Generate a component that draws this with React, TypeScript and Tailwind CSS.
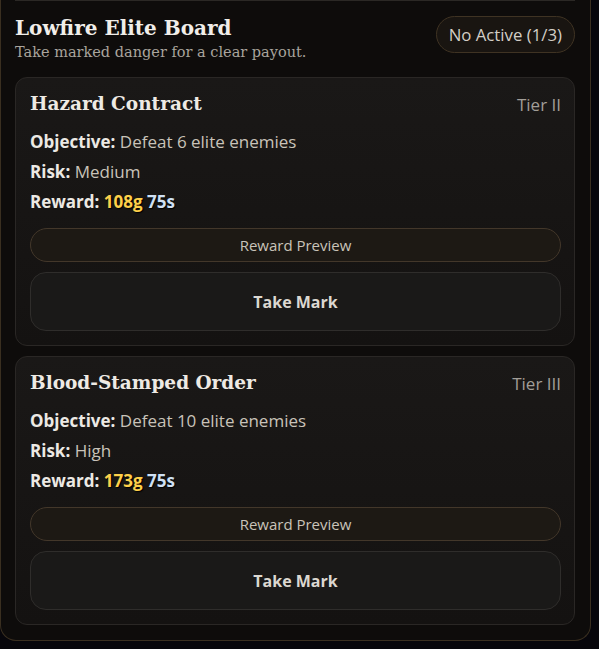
import React from "react";

const serif = { fontFamily: '"DejaVu Serif", Georgia, serif' };

function Contract({ title, tier, count, risk, gold }: { title: string; tier: string; count: number; risk: string; gold: string }) {
  return (
    <div className="rounded-xl border border-[#2a2725] bg-gradient-to-b from-[#1a1817] to-[#141211] pl-[14px] pr-[13px] pt-[13px] pb-[14px]">
      <div className="flex items-start justify-between">
        <h3 className="text-[18.5px] font-bold leading-[26px] text-[#eeeae4]" style={serif}>{title}</h3>
        <span className="mt-[1px] text-[17px] leading-[26px] text-[#a29e98]">{tier}</span>
      </div>
      <div className="mt-[12px] flex flex-col gap-[6px] text-[17px] leading-[24px]">
        <div className="text-[#c9c3b9]"><span className="font-bold text-[#ece9e4]">Objective:</span> Defeat {count} elite enemies</div>
        <div className="text-[#c9c3b9]"><span className="font-bold text-[#ece9e4]">Risk:</span> {risk}</div>
        <div className="text-[#c9c3b9]">
          <span className="font-bold text-[#ece9e4]">Reward:</span>{" "}
          <span className="font-bold text-[#fdd04a] [text-shadow:1px_1px_1px_#000]">{gold}</span>{" "}
          <span className="font-bold text-[#cfe0f4] [text-shadow:1px_1px_1px_#000]">75s</span>
        </div>
      </div>
      <button className="mt-[14px] flex h-[34px] w-full items-center justify-center rounded-full border border-[#43372a] bg-[#1d1914] text-[15px] text-[#c9c3b9]">
        Reward Preview
      </button>
      <button className="mt-[10px] flex h-[59px] w-full items-center justify-center rounded-2xl border border-[#2f2d2b] bg-[#1a1918] text-[16px] font-bold text-[#dcd8d1]">
        Take Mark
      </button>
    </div>
  );
}

export default function App() {
  return (
    <div className="min-h-[649px] w-[599px] bg-[#07060b]" style={{ fontFamily: '"Open Sans", "Noto Sans", sans-serif' }}>
      <div className="w-[591px] rounded-b-2xl border border-t-0 border-[#3a2f20] bg-[#0e0c0b] pl-[14px] pr-[15px] pb-[15px]">
        <div className="border-t border-[#2b2825]" />
        <div className="flex items-start justify-between pt-[14px] pb-[16px]">
          <div>
            <h2 className="text-[20px] font-bold leading-[26px] text-[#f1eee9]" style={serif}>Lowfire Elite Board</h2>
            <p className="mt-[2px] text-[14.5px] leading-[18px] text-[#a9a49d]" style={serif}>Take marked danger for a clear payout.</p>
          </div>
          <div className="mt-[1px] flex h-[37px] items-center rounded-full border border-[#3f3323] bg-[#191511] px-[12px] text-[16.8px] text-[#d3cec6]">
            No Active (1/3)
          </div>
        </div>
        <div className="flex flex-col gap-[10px]">
          <Contract title="Hazard Contract" tier="Tier II" count={6} risk="Medium" gold="108g" />
          <Contract title="Blood-Stamped Order" tier="Tier III" count={10} risk="High" gold="173g" />
        </div>
      </div>
    </div>
  );
}
